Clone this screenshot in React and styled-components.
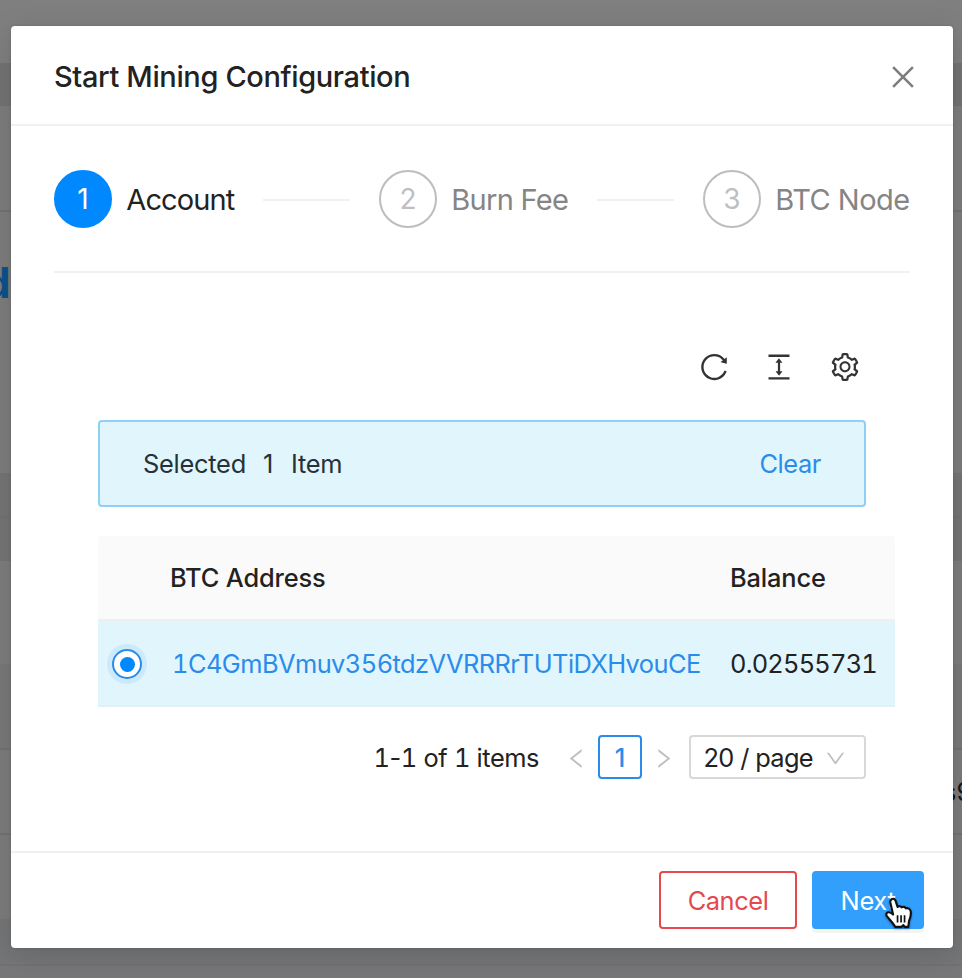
import React from "react";
import styled, { createGlobalStyle } from "styled-components";
import {
  AiOutlineReload,
  AiOutlineColumnHeight,
  AiOutlineSetting,
  AiOutlineClose,
  AiOutlineLeft,
  AiOutlineRight,
  AiOutlineDown,
} from "react-icons/ai";

const Global = createGlobalStyle`
  * { box-sizing: border-box; }
  body { margin: 0; overflow: hidden; }
`;

const Screen = styled.div`
  position: relative;
  width: 962px;
  height: 978px;
  padding: 26px 9px 0 11px;
  overflow: hidden;
  font-family: Inter, "Liberation Sans", sans-serif;
  font-size: 25.4px;
  color: #222;
`;

const Backdrop = styled.div`
  position: absolute;
  inset: 0;
  display: flex;
  flex-direction: column;
`;

const Band = styled.div`
  flex: none;
  height: ${(p) => p.$h}px;
  background: ${(p) => p.$bg};
  border-bottom: ${(p) => (p.$line ? "2px solid #727272" : "0")};
`;

const PeekLeft = styled.div`
  position: absolute;
  left: -16px;
  top: 257px;
  font-size: 42px;
  line-height: 52px;
  font-weight: 700;
  color: #0c518b;
`;

const PeekRight = styled.div`
  position: absolute;
  left: 943px;
  top: 776px;
  line-height: 32px;
  color: #161616;
  white-space: nowrap;
`;

const Modal = styled.section`
  position: relative;
  display: flex;
  flex-direction: column;
  height: 921.5px;
  background: #fff;
  border-radius: 4px;
  box-shadow: 0 7px 30px rgba(0, 0, 0, 0.14), 0 0 3px rgba(0, 0, 0, 0.12);
`;

const Header = styled.header`
  display: flex;
  align-items: center;
  justify-content: space-between;
  height: 100px;
  padding: 2px 34px 0 43px;
  border-bottom: 2px solid #f0f0f0;
`;

const Text = styled.span`
  font-size: ${(p) => p.$size || 25.4}px;
  font-weight: ${(p) => p.$weight || 400};
  letter-spacing: ${(p) => p.$ls || 0}px;
  color: ${(p) => p.$color || "inherit"};
  font-feature-settings: ${(p) => (p.$tnum ? "'tnum'" : "normal")};
  white-space: pre;
`;

const CloseButton = styled.button`
  display: flex;
  padding: 2px 0 0;
  border: 0;
  background: none;
  color: #7d7d7d;
  font-size: 32px;
`;

const Body = styled.main`
  flex: 1;
  padding: 0 43px;
`;

const Steps = styled.div`
  display: flex;
  align-items: center;
  height: 147px;
  border-bottom: 2px solid #f0f0f0;
`;

const Step = styled.div`
  display: flex;
  align-items: center;
  width: ${(p) => p.$w}px;
  color: ${(p) => (p.$active ? "#222" : "#858585")};
`;

const StepTitle = styled.div`
  padding-top: 2px;
  font-size: 29px;
  letter-spacing: ${(p) => p.$ls}px;
  white-space: nowrap;
`;

const StepDot = styled.div`
  display: grid;
  place-items: center;
  flex: none;
  width: 58px;
  height: 58px;
  margin-right: 14.3px;
  padding-top: 1px;
  border: 2px solid ${(p) => (p.$active ? "#0088fe" : "#bdbdbd")};
  border-radius: 50%;
  background: ${(p) => (p.$active ? "#0088fe" : "#fff")};
  color: ${(p) => (p.$active ? "#fff" : "#bfbfbf")};
  font-size: 28px;
`;

const StepLine = styled.div`
  flex: 1;
  height: 2px;
  margin: 2px 29px 0;
  background: #f0f0f0;
`;

const Toolbar = styled.div`
  display: flex;
  justify-content: flex-end;
  gap: 33.3px;
  padding: 78px 49.3px 0 0;
  font-size: 32px;
  color: #333;
`;

const Alert = styled.div`
  display: flex;
  justify-content: space-between;
  align-items: center;
  width: 768px;
  height: 87px;
  margin: 37px 0 29px 44px;
  padding: 0 43px 0 43px;
  border: 2px solid #90d0f8;
  border-radius: 4px;
  background: #e1f5fd;
  color: #263238;
`;

const AlertWords = styled.div`
  display: flex;
`;

const AlertWord = styled.span`
  width: ${(p) => p.$w}px;
  letter-spacing: ${(p) => p.$ls}px;
`;

const Table = styled.div`
  width: 797px;
  margin-left: 44px;
`;

const Row = styled.div`
  display: grid;
  grid-template-columns: 72px 560px 1fr;
  align-items: center;
  height: ${(p) => (p.$head ? 85 : 86)}px;
  background: ${(p) => (p.$head ? "#fafafa" : "#e1f5fd")};
  border-bottom: 2px solid ${(p) => (p.$head ? "#eeeff0" : "#e2eff5")};
  border-radius: ${(p) => (p.$head ? "4px 4px 0 0" : "0")};
`;

const Address = styled.a`
  padding-left: 2px;
  color: #2a8cea;
  letter-spacing: -0.547px;
  font-feature-settings: "tnum";
`;

const Radio = styled.div`
  display: grid;
  place-items: center;
  width: 30px;
  height: 30px;
  margin: 2px 0 0 14px;
  border: 2px solid #2a8cea;
  border-radius: 50%;
  background: #fff;
  box-shadow: 0 0 0 5px #cdeafc;
  &::after {
    content: "";
    width: 15px;
    height: 15px;
    border-radius: 50%;
    background: #0088fe;
  }
`;

const Pagination = styled.div`
  display: flex;
  align-items: center;
  justify-content: flex-end;
  width: 768px;
  height: 44px;
  margin: 28px 0 0 44px;
`;

const Arrow = styled.div`
  display: grid;
  place-items: center;
  width: 43.5px;
  height: 44px;
  padding-top: 3px;
  color: #bfbfbf;
  font-size: 25px;
`;

const Total = styled.div`
  width: 181px;
`;

const PageNumber = styled.div`
  display: grid;
  place-items: center;
  width: 44px;
  height: 44px;
  border: 2px solid #2a8cea;
  border-radius: 4px;
  color: #2a8cea;
  font-weight: 500;
`;

const PageSize = styled.div`
  display: flex;
  align-items: center;
  justify-content: space-between;
  width: 177px;
  height: 44px;
  margin-left: 3.5px;
  padding: 0 17px 0 12.5px;
  border: 2px solid #d8d8d8;
  border-radius: 4px;
  svg {
    color: #bfbfbf;
    font-size: 23px;
    margin-top: 3px;
  }
`;

const Footer = styled.footer`
  display: flex;
  justify-content: flex-end;
  gap: 15px;
  height: 96.5px;
  padding: 18px 29px 0;
  border-top: 2px solid #f0f0f0;
`;

const Button = styled.button`
  width: ${(p) => (p.$primary ? 112 : 138)}px;
  height: 58px;
  padding: 0;
  border: 2px solid ${(p) => (p.$primary ? "#329ffd" : "#e5484d")};
  border-radius: 4px;
  background: ${(p) => (p.$primary ? "#329ffd" : "#fff")};
  color: ${(p) => (p.$primary ? "#fff" : "#e5484d")};
  box-shadow: ${(p) => (p.$primary ? "0 4px 0 rgba(0,0,0,.045)" : "none")};
  font: inherit;
  letter-spacing: ${(p) => (p.$primary ? -0.3 : -0.42)}px;
`;

const Pointer = styled.svg`
  position: absolute;
  left: 874px;
  top: 870px;
  width: 30px;
  height: 34px;
  filter: drop-shadow(0 1px 1px rgba(0, 0, 0, 0.4));
`;

const bands = [
  [63, "#7f7f7f"],
  [43, "#737373"],
  [106, "#7d7d7d", true],
  [261, "#7d7d7d"],
  [45, "#757575", true],
  [43, "#757575"],
  [103, "#7d7d7d"],
  [86, "#797979", true],
  [85, "#7c7c7c", true],
  [84, "#7c7c7c"],
  [47, "#757677", true],
  [12, "#777779"],
];

export default function App() {
  return (
    <Screen>
      <Global />
      <Backdrop>
        {bands.map(([h, bg, line], i) => (
          <Band key={i} $h={h} $bg={bg} $line={line} />
        ))}
      </Backdrop>
      <PeekLeft>d</PeekLeft>
      <PeekRight>s9</PeekRight>
      <Modal>
        <Header>
          <Text $size={29} $weight={500} $ls={-0.37}>Start Mining Configuration</Text>
          <CloseButton aria-label="Close"><AiOutlineClose /></CloseButton>
        </Header>
        <Body>
          <Steps>
            <Step $w={325} $active>
              <StepDot $active>1</StepDot>
              <StepTitle $ls={-0.9}>Account</StepTitle>
              <StepLine />
            </Step>
            <Step $w={324}>
              <StepDot>2</StepDot>
              <StepTitle $ls={-0.7}>Burn Fee</StepTitle>
              <StepLine />
            </Step>
            <Step $w={207}>
              <StepDot>3</StepDot>
              <StepTitle $ls={-0.5}>BTC Node</StepTitle>
            </Step>
          </Steps>
          <Toolbar>
            <AiOutlineReload />
            <AiOutlineColumnHeight />
            <AiOutlineSetting />
          </Toolbar>
          <Alert>
            <AlertWords>
              <AlertWord $w={120} $ls={-0.25}>Selected</AlertWord>
              <AlertWord $w={28}>1</AlertWord>
              <AlertWord $w={60} $ls={-0.3}>Item</AlertWord>
            </AlertWords>
            <Text $color="#2a8cea" $ls={-0.4}>Clear</Text>
          </Alert>
          <Table>
            <Row $head>
              <span />
              <Text $weight={500} $ls={-0.15}>BTC Address</Text>
              <Text $weight={500} $ls={-0.15}>Balance</Text>
            </Row>
            <Row>
              <Radio />
              <Address>1C4GmBVmuv356tdzVVRRRrTUTiDXHvouCE</Address>
              <Text $tnum $ls={-0.8}>0.02555731</Text>
            </Row>
          </Table>
          <Pagination>
            <Total>
              <Text $tnum $ls={-0.45}>1</Text>
              <Text $ls={-0.45}>-</Text>
              <Text $tnum $ls={-0.45}>1</Text>
              <Text $ls={-0.45}> of </Text>
              <Text $tnum $ls={-0.45}>1</Text>
              <Text $ls={-0.45}> items</Text>
            </Total>
            <Arrow><AiOutlineLeft /></Arrow>
            <PageNumber>1</PageNumber>
            <Arrow><AiOutlineRight /></Arrow>
            <PageSize>
              <Text $ls={-0.65}>20 / page</Text>
              <AiOutlineDown />
            </PageSize>
          </Pagination>
        </Body>
        <Footer>
          <Button>Cancel</Button>
          <Button $primary>Next</Button>
        </Footer>
        <Pointer viewBox="0 0 28 32">
          <path
            d="M6 3.2C7.6 2 9.300 2.700 9.800 4.400L11.700 10.300C12.900 9.200 14.800 9.400 15.500 10.700C17 9.700 18.800 10.200 19.500 11.600C21.300 11 23.600 12 24.100 14.500C24.700 18 23.600 20.800 22.500 23.500L21.800 29H18.300L17.200 27.400L15.500 29H9.500C8 26 4.500 22.500 1.800 19.200C0.500 17.300 1.200 15.600 2.800 15.300C4.500 15 6 16 7.500 17.500L4.900 6C4.700 4.900 5 3.900 6 3.200Z"
            fill="#fff"
            stroke="#111"
            strokeWidth="2"
            strokeLinejoin="round"
          />
          <path d="M11.700 18V25M15 18V25M18.300 18V25" stroke="#111" strokeWidth="1.600" />
        </Pointer>
      </Modal>
    </Screen>
  );
}
